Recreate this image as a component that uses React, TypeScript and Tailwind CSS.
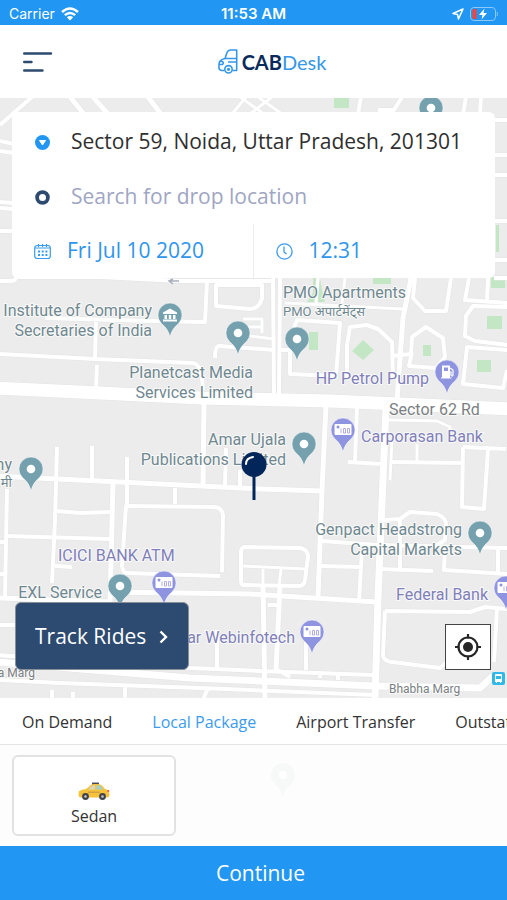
import React, { useState } from 'react';

interface Road {
  d: string;
  w: number;
}

interface Place {
  x: number;
  y: number;
  kind: 'dot' | 'museum' | 'cash' | 'fuel';
}

interface MapLabel {
  text: string;
  x: number;
  y: number;
  tone: string;
  size: string;
  anchor: 'start' | 'end';
}

const roads: Road[] = [
  // top strip
  { d: 'M0 125L32 97', w: 4 },
  { d: 'M70 97L84 114M93 97L108 114M148 97L161 114', w: 5 },
  { d: 'M232 114L246 97M240 97L264 114M250 114L272 97M258 97L282 114', w: 3 },
  { d: 'M361 97L358 114M402 97L394 110H378M466 97L463 114M481 97L480 114', w: 4 },
  { d: 'M0 141L14 144M0 151L14 153M0 202L14 203M0 208L14 209M0 231H14', w: 4 },
  { d: 'M494 120H508M494 155H508M494 175H508M494 221H508M494 260H508M494 278H508', w: 4 },
  { d: 'M0 281H12Q17 280 17 274', w: 4 },
  // north west
  { d: 'M17 277L100 277L180 281L275 281M207 281L205 322L150 321L45 318', w: 4 },
  { d: 'M96 322L95 357M97 365L96 390', w: 4 },
  { d: 'M216 285H262V298Q260 308 250 309L216 306Z', w: 4 },
  { d: 'M243 319H262V333M243 327H262M243 335L274 339', w: 3 },
  { d: 'M215 358Q215 346 219 346L274 350', w: 4 },
  { d: 'M0 354L95 359L193 363Q202 364 203 390', w: 4 },
  { d: 'M273 278L274 396M280 278L279 396', w: 4 },
  // north east
  { d: 'M285 303L403 309M318 278L316 303M345 278L342 303', w: 3 },
  { d: 'M411 278L403 318L397 400', w: 5 },
  { d: 'M293 330L297 320L340 323L336 376L290 374V350H281', w: 4 },
  { d: 'M347 377V345L350 327L367 325L378 329L392 342L393 378', w: 4 },
  { d: 'M392 356L411 354L412 337L426 327L443 338L445 357L436 368L409 366L412 352', w: 4 },
  { d: 'M415 278L413 298L425 311L446 311L451 278', w: 4 },
  { d: 'M469 278L465 300L508 303M488 278L487 300', w: 4 },
  { d: 'M508 307L473 306L466 316L465 336L475 341L508 345', w: 4 },
  { d: 'M508 350L467 347L463 384L503 388L507 370', w: 4 },
  // Sector 62 Rd
  { d: 'M-4 388L100 393L200 398L330 401L511 409', w: 13 },
  { d: 'M204 402L203 485', w: 5 },
  { d: 'M326 405L322 490L318 598', w: 5 },
  { d: 'M357 406L355 462M348 462L381 464M391 462L463 463', w: 4 },
  { d: 'M386 408L378 598L375 700', w: 7 },
  { d: 'M392 440L390 480M417 444V461M388 420L437 421L450 427V440', w: 3 },
  { d: 'M463 447L506 449M463 447L462 507L484 509L488 449', w: 4 },
  // middle
  { d: 'M-4 476L120 482L260 489L322 491', w: 5 },
  { d: 'M57 447L55 520L52 583M92 446V480M127 457V504M7 489L5 598', w: 4 },
  { d: 'M113 482L110 604', w: 5 },
  { d: 'M57 511L80 513L110 512M7 536L110 539M0 542H6M0 574H6M55 566L72 567', w: 4 },
  { d: 'M222 572L223 515Q222 507 213 507L126 506L122 566Q123 573 127 573L220 576', w: 4 },
  { d: 'M175 488V504M226 448L225 485M240 470V488', w: 4 },
  { d: 'M243 547L300 548Q308 549 308 557L305 580Q304 586 299 586L243 585Q241 585 241 580V552Q241 547 246 547', w: 4 },
  { d: 'M243 566L305 569M263 569V586M281 569L279 586', w: 3 },
  { d: 'M383 520L400 519L410 512L437 514Q447 518 446 526L445 540L436 546', w: 4 },
  { d: 'M322 541L377 545L508 548M321 566L361 567M380 569L433 571M362 550L359 602M400 519V570', w: 4 },
  { d: 'M445 547L444 570L508 574M498 548V573', w: 4 },
  // south
  { d: 'M0 598L110 602M110 592L250 594L376 602', w: 5 },
  { d: 'M263 586L265 700M280 586L276 670', w: 5 },
  { d: 'M268 605H280M306 640V670M217 630V668M30 655V625H0', w: 4 },
  { d: 'M385 611L383 655Q383 661 392 662L440 668L449 660M385 611L470 612L485 607L508 609M497 608L494 662', w: 4 },
  { d: 'M-4 655L190 668L260 671L373 675M278 670L290 677M320 673V678M338 674V680', w: 4 },
  { d: 'M-4 662L190 678L375 686L480 688L493 676', w: 7 },
  { d: 'M0 680L60 683L200 688L375 695M52 700V690M73 700V692M125 700V686M208 688L203 700', w: 4 },
];

const parks = [
  'M334 98H349V108H334Z',
  'M309 332H318V350H309Z',
  'M363 340L374 350L363 360L352 351Z',
  'M423 345H431V356H423Z',
  'M487 316H502V329H487Z',
  'M477 360H491V372H477Z',
  'M491 277H505V288H491Z',
  'M373 278H391V284H373Z',
  'M313 278H320L322 290L325 302H307L313 293Z',
  'M496 225H499V252H496Z',
];

const SLATE = 'fill-[#6f8890]';
const VIOLET = 'fill-[#7f80ba]';
const GREY = 'fill-[#7b7f83]';

const labels: MapLabel[] = [
  { text: 'PMO Apartments', x: 283, y: 298, tone: SLATE, size: 'text-[16px]', anchor: 'start' },
  { text: 'PMO अपार्टमेंट्स', x: 283, y: 316, tone: SLATE, size: 'text-[13px]', anchor: 'start' },
  { text: 'Institute of Company', x: 152, y: 316, tone: SLATE, size: 'text-[16px]', anchor: 'end' },
  { text: 'Secretaries of India', x: 152, y: 336, tone: SLATE, size: 'text-[16px]', anchor: 'end' },
  { text: 'Planetcast Media', x: 253, y: 378, tone: SLATE, size: 'text-[16px]', anchor: 'end' },
  { text: 'Services Limited', x: 253, y: 398, tone: SLATE, size: 'text-[16px]', anchor: 'end' },
  { text: 'HP Petrol Pump', x: 429, y: 384, tone: VIOLET, size: 'text-[16px]', anchor: 'end' },
  { text: 'Sector 62 Rd', x: 389, y: 415, tone: GREY, size: 'text-[16px]', anchor: 'start' },
  { text: 'Carporasan Bank', x: 361, y: 442, tone: VIOLET, size: 'text-[16px]', anchor: 'start' },
  { text: 'Amar Ujala', x: 286, y: 445, tone: SLATE, size: 'text-[16px]', anchor: 'end' },
  { text: 'Publications Limited', x: 286, y: 465, tone: SLATE, size: 'text-[16px]', anchor: 'end' },
  { text: 'Company', x: 12, y: 470, tone: SLATE, size: 'text-[16px]', anchor: 'end' },
  { text: 'कंपनी मी', x: 12, y: 487, tone: SLATE, size: 'text-[13px]', anchor: 'end' },
  { text: 'Genpact Headstrong', x: 462, y: 535, tone: SLATE, size: 'text-[16px]', anchor: 'end' },
  { text: 'Capital Markets', x: 462, y: 555, tone: SLATE, size: 'text-[16px]', anchor: 'end' },
  { text: 'ICICI BANK ATM', x: 58, y: 561, tone: VIOLET, size: 'text-[16px]', anchor: 'start' },
  { text: 'EXL Service', x: 102, y: 598, tone: SLATE, size: 'text-[16px]', anchor: 'end' },
  { text: 'Federal Bank', x: 488, y: 600, tone: VIOLET, size: 'text-[16px]', anchor: 'end' },
  { text: 'Kumar Webinfotech', x: 295, y: 643, tone: VIOLET, size: 'text-[16px]', anchor: 'end' },
  { text: 'Bhabha Marg', x: 35, y: 677, tone: GREY, size: 'text-[12px]', anchor: 'end' },
  { text: 'Bhabha Marg', x: 389, y: 693, tone: GREY, size: 'text-[12px]', anchor: 'start' },
];

const places: Place[] = [
  { x: 431, y: 108, kind: 'dot' },
  { x: 170, y: 315, kind: 'museum' },
  { x: 238, y: 333, kind: 'dot' },
  { x: 297, y: 339, kind: 'dot' },
  { x: 447, y: 372, kind: 'fuel' },
  { x: 343, y: 430, kind: 'cash' },
  { x: 304, y: 444, kind: 'dot' },
  { x: 31, y: 469, kind: 'dot' },
  { x: 480, y: 533, kind: 'dot' },
  { x: 164, y: 583, kind: 'cash' },
  { x: 120, y: 586, kind: 'dot' },
  { x: 506, y: 588, kind: 'cash' },
  { x: 312, y: 632, kind: 'cash' },
];

const PIN = 'M0 22C-1.5 15.500-4.500 12-8.700 8.300A12 12 0 1 1 8.700 8.300C4.500 12 1.500 15.500 0 22Z';

const PlacePin = ({ x, y, kind }: Place) => {
  const violet = kind === 'cash' || kind === 'fuel';
  return (
    <g transform={`translate(${x} ${y})`}>
      <path d={PIN} fill={violet ? '#8f94e0' : '#75a0ae'} stroke="#fff" strokeWidth="0.500" />
      {kind === 'dot' && <circle r="4.300" fill="#fff" />}
      {kind === 'museum' && (
        <path d="M-7-2.500L0-6.500L7-2.500V-1H-7ZM-5.500 0H-3V4H-5.500ZM-1.200 0H1.200V4H-1.200ZM3 0H5.500V4H3ZM-7 4.500H7V6.500H-7Z" fill="#fff" />
      )}
      {kind === 'cash' && (
        <>
          <rect x="-8.500" y="-6" width="17" height="11" rx="1" fill="#fff" />
          <circle cx="-5" cy="-3" r="1.500" fill="#8f94e0" />
          <path d="M-2-1.500V3M0.500-1.500H2.500V3H0.500ZM4.500-1.500H6.500V3H4.500Z" fill="none" stroke="#a9a5e6" strokeWidth="0.900" />
        </>
      )}
      {kind === 'fuel' && (
        <>
          <path d="M-5-6.500H3V5.500H4.500V6.500H-6V5.500H-5Z" fill="#fff" />
          <path d="M-3-4.500H1V-1H-3Z" fill="#8f94e0" />
          <path d="M3-4L6-2V3Q6 4 5 4T4 3V0H3" fill="none" stroke="#fff" strokeWidth="1.200" />
        </>
      )}
    </g>
  );
};

const CityMap = () => (
  <svg
    className="absolute inset-0 h-full w-full bg-[#ececec] font-['Roboto','Noto_Sans',sans-serif]"
    viewBox="0 98 507 600"
    preserveAspectRatio="xMidYMid slice"
    role="img"
    aria-label="Map"
  >
    {parks.map(d => <path key={d} d={d} fill="#c3e7c4" />)}
    <g fill="none" stroke="#e3e4e5" strokeLinejoin="round">
      {roads.map(r => <path key={r.d} d={r.d} strokeWidth={r.w + 1} />)}
    </g>
    <g fill="none" stroke="#fff" strokeLinejoin="round">
      {roads.map(r => <path key={r.d} d={r.d} strokeWidth={r.w} />)}
    </g>
    <path d="M179 281H169M173 279L169 281L173 284" fill="none" stroke="#a9b0bb" strokeWidth="1.500" />
    {labels.map(l => (
      <text
        key={`${l.text}-${l.x}`}
        x={l.x}
        y={l.y}
        textAnchor={l.anchor}
        className={`${l.size} ${l.tone} stroke-white/70 stroke-2 [paint-order:stroke]`}
      >
        {l.text}
      </text>
    ))}
    {places.map(p => <PlacePin key={`${p.x}-${p.y}`} {...p} />)}
    <g transform="translate(492 672)">
      <rect width="13" height="13" rx="2" fill="#30b9e8" />
      <path d="M3 3Q3 2 4 2H9Q10 2 10 3V10H9V11H8V10H5V11H4V10H3Z" fill="#fff" />
      <path d="M4 4H9V7H4Z" fill="#30b9e8" />
    </g>
    <path d="M254 470V500" stroke="#03265a" strokeWidth="3" />
    <circle cx="254" cy="464.500" r="12.500" fill="#03265a" />
    <path d="M246 464Q246 458 253 457" fill="none" stroke="#fff" strokeWidth="2" strokeLinecap="round" />
  </svg>
);

const StatusBar = () => (
  <div className="grid h-[25px] grid-cols-3 items-center bg-[#2196f3] px-[9px] pt-0.5 font-['Inter',sans-serif] text-sm text-white">
    <div className="flex items-center gap-1.5">
      <span>Carrier</span>
      <svg width="18" height="14" viewBox="0 0 18 14" aria-hidden="true">
        <g fill="none" stroke="#fff" strokeWidth="2.400">
          <path d="M1 5Q9-2 17 5" />
          <path d="M3.800 8.200Q9 3.600 14.200 8.200" />
        </g>
        <path d="M9 13.500L5.800 10.300Q9 7.600 12.200 10.300Z" fill="#fff" />
      </svg>
    </div>
    <span className="text-center text-[15px] font-semibold">11:53 AM</span>
    <div className="flex items-center justify-end gap-1.5">
      <svg width="12" height="12" viewBox="0 0 12 12" aria-hidden="true">
        <path d="M11 1L1 5.500L5.500 6.500L6.500 11Z" fill="none" stroke="#fff" strokeWidth="1.500" strokeLinejoin="round" />
      </svg>
      <svg width="28" height="14" viewBox="0 0 28 14" aria-hidden="true">
        <rect x="0.500" y="0.500" width="25" height="13" rx="3.500" fill="none" stroke="#8cc8f9" />
        <path d="M27 5Q28 7 27 9" stroke="#8cc8f9" fill="none" />
        <path d="M2.500 3.500Q2.500 2 4 2H6.500V12H4Q2.500 12 2.500 10.500Z" fill="#f0443c" />
        <path d="M14.500 1.500L9 8H12.500L11.500 12.500L17 6H13.500Z" fill="#fff" />
      </svg>
    </div>
  </div>
);

const Header = () => (
  <header className="flex h-[73px] items-center bg-white px-[23px]">
    <button type="button" aria-label="Menu" className="w-[37px]">
      <svg width="30" height="20" viewBox="0 0 30 20" fill="none" stroke="#2d4a70" strokeWidth="2.400" strokeLinecap="round">
        <path d="M1.200 1.500H28M1.200 10H8.500M1.200 18.500H19.500" />
      </svg>
    </button>
    <div className="flex flex-1 items-center justify-center gap-1">
      <svg width="20" height="25" viewBox="0 0 20 25" fill="none" stroke="#3597ea" strokeWidth="1.600" strokeLinejoin="round" aria-hidden="true">
        <path d="M14.500 21.500H18.700V1H13Q10 1 9 3.500L7 9.500Q1 11 1 15V18.500Q1 21 3.500 21.500H6.500" />
        <path d="M7 9.500H18.500M10 13H18.500M1.500 12.500H4.500Q6 14 4.500 15.500H1" />
        <circle cx="10.500" cy="20.300" r="3.700" />
        <circle cx="10.500" cy="20.300" r="0.800" />
      </svg>
      <span className="font-['Lato',sans-serif] text-[20px] leading-6">
        <span className="font-bold text-[#0a2a5c]">CAB</span>
        <span className="text-[#3597ea]">Desk</span>
      </span>
    </div>
  </header>
);

const TripForm = () => {
  const [pickup, setPickup] = useState('Sector 59, Noida, Uttar Pradesh, 201301');
  const [drop, setDrop] = useState('');

  return (
    <form className="relative mx-3 mt-3.5 rounded-md bg-white pt-0.5 text-[21px]">
      <div className="flex h-14 items-center gap-[21px] pr-3 pl-[23px]">
        <label htmlFor="pickup" aria-label="Pickup location">
          <svg width="15" height="15" viewBox="0 0 15 15">
            <circle cx="7.500" cy="7.500" r="7.500" fill="#2196f3" />
            <path d="M4.500 5.500H10.500L7.500 10Z" fill="#fff" stroke="#fff" strokeLinejoin="round" />
          </svg>
        </label>
        <input
          id="pickup"
          value={pickup}
          onChange={e => setPickup(e.target.value)}
          className="min-w-0 flex-1 text-[#2f2f2f] outline-none"
        />
      </div>
      <div className="flex h-[54px] items-center gap-[21px] pr-3 pl-[23px]">
        <label htmlFor="drop" aria-label="Drop location">
          <svg width="15" height="15" viewBox="0 0 15 15">
            <circle cx="7.500" cy="7.500" r="5.400" fill="none" stroke="#2d4a70" strokeWidth="3.800" />
          </svg>
        </label>
        <input
          id="drop"
          value={drop}
          onChange={e => setDrop(e.target.value)}
          placeholder="Search for drop location"
          className="min-w-0 flex-1 outline-none placeholder:text-[#9fa6c4]"
        />
      </div>
      <div className="grid h-[54px] grid-cols-2 text-[#2f95ec]">
        <button type="button" className="flex items-center gap-4 border-r border-[#ececec] pl-[22px]">
          <svg width="17" height="17" viewBox="0 0 17 17" fill="none" stroke="#3b9bee" strokeWidth="1.200">
            <rect x="0.700" y="2.500" width="15.600" height="13" rx="2.500" />
            <path d="M4.500 1V4M8.500 1V4M12.500 1V4M1 5H16" />
            <path d="M4 8.500H13.500M4 12H13.500" strokeWidth="2" strokeDasharray="2 1.700" />
          </svg>
          Fri Jul 10 2020
        </button>
        <button type="button" className="flex items-center gap-4 pl-[22px]">
          <svg width="17" height="17" viewBox="0 0 17 17" fill="none" stroke="#3b9bee" strokeWidth="1.300">
            <circle cx="8.500" cy="8.500" r="7.600" />
            <path d="M8 3.500V9L10.500 11" />
          </svg>
          12:31
        </button>
      </div>
    </form>
  );
};

const TaxiIcon = () => (
  <svg width="32" height="18" viewBox="0 0 32 18" aria-hidden="true">
    <rect x="14" y="0.500" width="7" height="3" rx="0.500" fill="#4a4f57" />
    <path d="M1 15Q0 12 1 9Q4 7.500 8 7L13 3Q14 2 16 2H20Q22 2 24 3.500L27 7Q31 7.500 31 10L31.500 13Q31.500 15 29 15.500H3Z" fill="#f7c23c" />
    <path d="M10 7.500L14 4Q15 3.200 16 3.200H17V7.500Z" fill="#d5d6c6" />
    <path d="M18.500 3.200H20Q22 3.200 23 4.500L25 7.500H18.500Z" fill="#9ed2d0" />
    <path d="M10 9.500H22V11H10Z" fill="#cfa243" />
    <path d="M29 8H31.200V10H29.500Z" fill="#ec6b40" />
    <circle cx="7.500" cy="14.500" r="3.400" fill="#3f444c" />
    <circle cx="7.500" cy="14.500" r="1.300" fill="#c5c8cc" />
    <circle cx="24.500" cy="14.500" r="3.400" fill="#3f444c" />
    <circle cx="24.500" cy="14.500" r="1.300" fill="#c5c8cc" />
  </svg>
);

const tabs = ['On Demand', 'Local Package', 'Airport Transfer', 'Outstation'];

const App: React.FC = () => {
  const [tab, setTab] = useState('Local Package');

  return (
    <div className="flex min-h-screen flex-col bg-white font-['Open_Sans','Noto_Sans',sans-serif]">
      <StatusBar />
      <Header />

      <main className="relative flex flex-1 flex-col justify-between overflow-hidden">
        <CityMap />
        <TripForm />
        <div className="relative flex items-end justify-between pr-4 pb-7 pl-[15px]">
          <button type="button" className="flex h-[68px] items-center gap-3 rounded-md border border-[#8a8f98] bg-[#2d4a70] px-[19px] pt-0.5 text-[21px] text-white">
            Track Rides
            <svg width="11" height="14" viewBox="0 0 11 14" fill="none" stroke="#fff" strokeWidth="2.400">
              <path d="M2.500 1.500L8 7L2.500 12.500" />
            </svg>
          </button>
          <button type="button" aria-label="My location" className="flex size-[46px] items-center justify-center border border-[#444] bg-white">
            <svg width="26" height="26" viewBox="0 0 26 26" fill="none" stroke="#262626" strokeWidth="2.200">
              <circle cx="13" cy="13" r="9.500" />
              <circle cx="13" cy="13" r="5" fill="#262626" stroke="none" />
              <path d="M13 0V4.500M13 21.500V26M0 13H4.500M21.500 13H26" />
            </svg>
          </button>
        </div>
      </main>

      <nav className="flex h-[47px] items-center gap-10 overflow-hidden border-b border-[#e6e6e6] pt-0.5 pl-[22px]">
        {tabs.map(t => (
          <button
            key={t}
            type="button"
            onClick={() => setTab(t)}
            className={`shrink-0 text-base whitespace-nowrap ${t === tab ? 'text-[#3b9bee]' : 'text-[#333]'}`}
          >
            {t}
          </button>
        ))}
      </nav>

      <section className="flex items-start bg-[#fdfdfd] px-3 py-2.5">
        <button type="button" className="flex h-[81px] w-[164px] flex-col items-center justify-end gap-1 rounded-md border-2 border-[#e2e2e2] bg-white pb-1.5">
          <TaxiIcon />
          <span className="text-base text-[#333]">Sedan</span>
        </button>
        <svg className="mt-2 ml-[95px]" width="24" height="34" viewBox="-12 -12 24 34" aria-hidden="true">
          <path d={PIN} fill="#f7f9f9" />
          <circle r="4" fill="#fff" />
        </svg>
      </section>

      <button type="button" className="h-[54px] bg-[#2196f3] pt-0.5 pl-3.5 text-[21px] text-white">
        Continue
      </button>
    </div>
  );
};

export default App;
